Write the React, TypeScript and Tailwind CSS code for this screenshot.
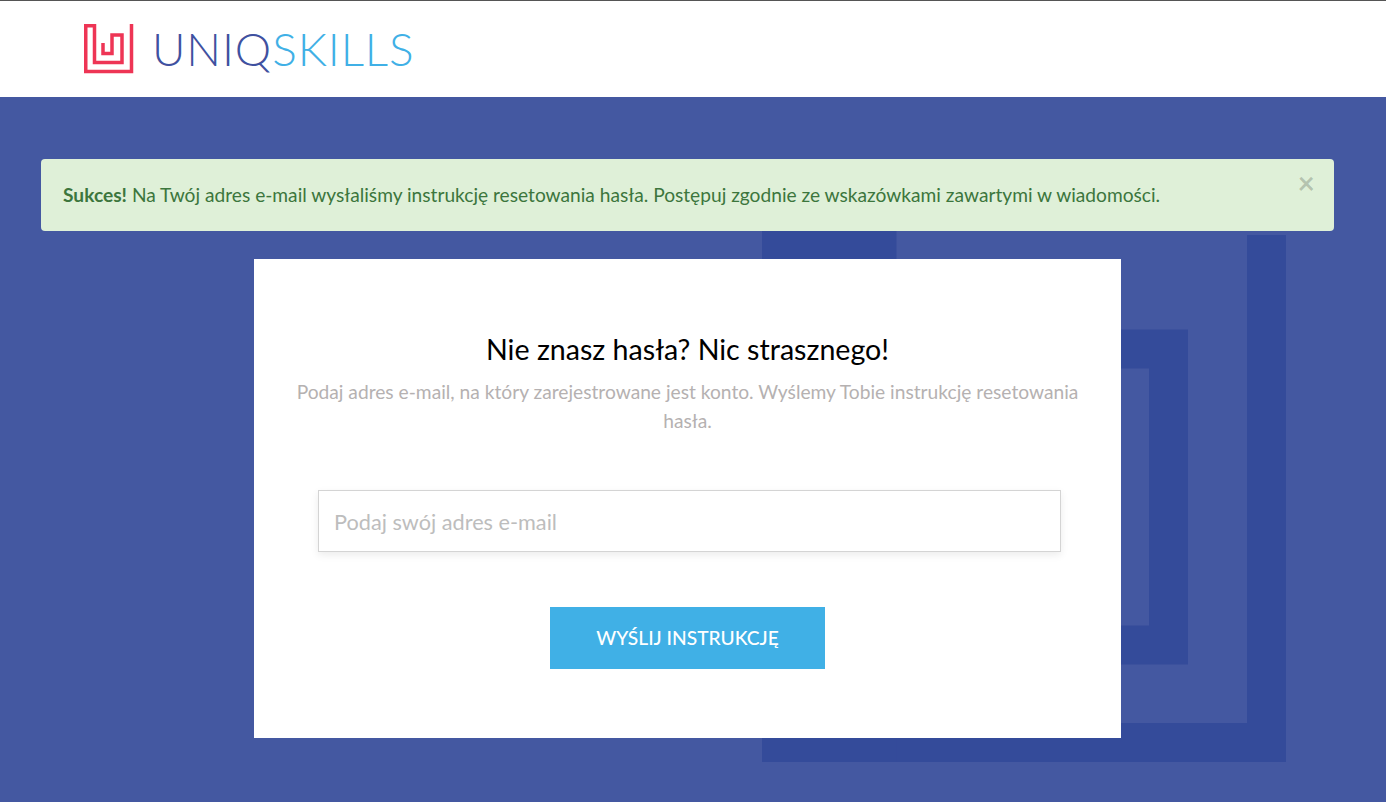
export default function App() {
  return (
    <div className="relative h-screen overflow-hidden bg-[#4458a1] font-['Lato',sans-serif]">
      <header className="flex h-[97px] items-center gap-[18px] border-t border-[#555] bg-white pl-[84px]">
        <svg width="50" height="50" viewBox="0 0 50 50" fill="none" stroke="#ee3555" strokeWidth="3.5" className="shrink-0">
          <path d="M47.5 0V47.5H1.75V1.75H10.5V38.5H38V11H28V29.5H19V19" />
        </svg>
        <div className="text-[46px] leading-none font-light tracking-[0.9px] whitespace-nowrap">
          <span className="text-[#3f51a0]">UNIQ</span>
          <span className="text-[#40b0e6]">SKILLS</span>
        </div>
      </header>

      {/* watermark of the logo behind the card */}
      <svg width="524" height="540" viewBox="0 0 524 540" fill="none" stroke="#344b9a" strokeWidth="39" className="absolute top-[222px] left-[762px]">
        <path d="M504.5 13V520.5H19.5" />
        <rect x="0" y="0" width="134.5" height="540" fill="#344b9a" stroke="none" />
        <path d="M100 423H406.5V127H298V350H200V250" />
      </svg>

      <main className="relative w-[1375px] px-[41px] pt-[62px]">
        <div className="flex h-[72px] items-start justify-between rounded bg-[#dff0d8] pt-[23px] pr-[19px] pl-[22px] text-[19.17px] leading-[26px] text-[#3c763d]">
          <p>
            <strong>Sukces!</strong> Na Twój adres e-mail wysłaliśmy instrukcję resetowania hasła. Postępuj zgodnie ze wskazówkami zawartymi w wiadomości.
          </p>
          <button type="button" className="-mt-[15px] text-[30px] leading-[30px] font-bold text-black/20">×</button>
        </div>

        <section className="mx-auto mt-[28px] flex h-[479px] w-[867px] flex-col items-center bg-white px-[40px] pt-[71px]">
          <h1 className="text-[28.6px] leading-[38px] font-normal text-black">Nie znasz hasła? Nic strasznego!</h1>
          <p className="mt-[9px] text-center text-[19.2px] leading-[29px] text-[#b5b1b1]">
            Podaj adres e-mail, na który zarejestrowane jest konto. Wyślemy Tobie instrukcję resetowania hasła.
          </p>
          <input
            type="email"
            placeholder="Podaj swój adres e-mail"
            className="mt-[55px] ml-[4px] h-[62px] w-[743px] shrink-0 border border-[#d4d4d4] bg-white px-[15px] pt-[2px] text-[21.7px] shadow-[0_3px_8px_rgba(0,0,0,0.08)] outline-none placeholder:text-[#bdbdbd]"
          />
          <button type="button" className="mt-[55px] h-[62px] w-[275px] shrink-0 bg-[#40b0e6] text-[19.2px] font-medium text-white uppercase">
            Wyślij instrukcję
          </button>
        </section>
      </main>
    </div>
  )
}
